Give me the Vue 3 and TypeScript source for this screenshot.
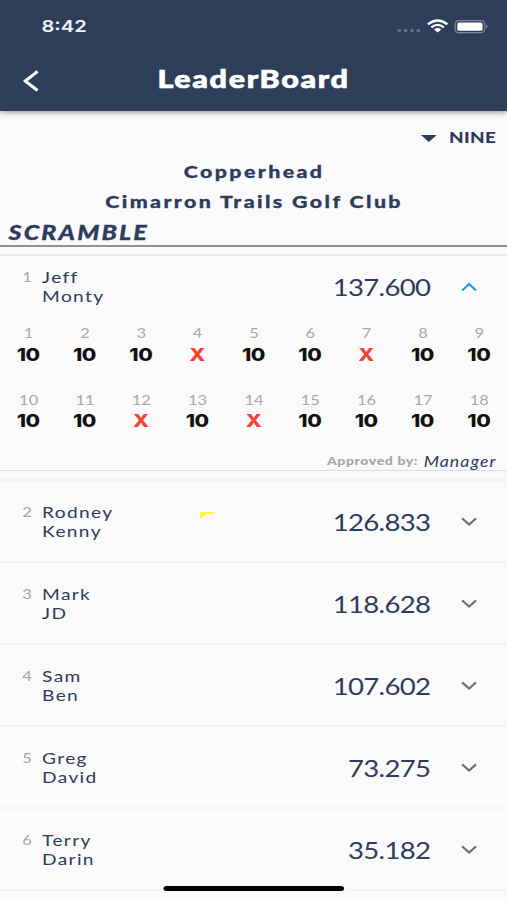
<script setup lang="ts">
import { ref } from 'vue'

interface Team {
  rank: number
  players: [string, string]
  score: string
  holes?: string[]
  approvedBy?: string
}

const teams: Team[] = [
  {
    rank: 1,
    players: ['Jeff', 'Monty'],
    score: '137.600',
    holes: ['10', '10', '10', 'X', '10', '10', 'X', '10', '10', '10', '10', 'X', '10', 'X', '10', '10', '10', '10'],
    approvedBy: 'Manager',
  },
  { rank: 2, players: ['Rodney', 'Kenny'], score: '126.833' },
  { rank: 3, players: ['Mark', 'JD'], score: '118.628' },
  { rank: 4, players: ['Sam', 'Ben'], score: '107.602' },
  { rank: 5, players: ['Greg', 'David'], score: '73.275' },
  { rank: 6, players: ['Terry', 'Darin'], score: '35.182' },
]

const openRank = ref<number | null>(1)

function toggle(rank: number) {
  openRank.value = openRank.value === rank ? null : rank
}
</script>

<template>
  <div class="viewport">
    <main class="screen">
      <header class="app-bar">
        <div class="status">
          <span class="clock">8:42</span>
          <svg class="status-icons" viewBox="0 0 90 16" preserveAspectRatio="none">
            <g fill="#626e87">
              <circle cx="2.8" cy="12.6" r="1.9" /><circle cx="9.1" cy="12.6" r="1.9" />
              <circle cx="15.4" cy="12.6" r="1.9" /><circle cx="21.8" cy="12.6" r="1.9" />
            </g>
            <g fill="none" stroke="#fff" stroke-width="2.3">
              <path d="M31.3 6.3 Q41 -1.3 50.7 6.3" />
              <path d="M34.7 9.3 Q41 4.4 47.3 9.3" />
            </g>
            <path d="M37.4 11.4 Q41 8.6 44.6 11.4 L41 14.6 Z" fill="#fff" />
            <rect x="58.4" y="2.6" width="29.6" height="12" rx="3.6" fill="none" stroke="#7d879c" stroke-width="1.2" />
            <rect x="60.6" y="4.4" width="25.2" height="8.4" rx="1.6" fill="#fff" />
            <path d="M89.4 6.4 Q92.4 8.6 89.4 10.8Z" fill="#7d879c" />
          </svg>
        </div>
        <div class="title-row">
          <svg class="back" viewBox="0 0 16 22" preserveAspectRatio="none">
            <path d="M14.5 1.5 L2 11 L14.5 20.5" fill="none" stroke="#fff" stroke-width="3.1" />
          </svg>
          <h1>LeaderBoard</h1>
        </div>
      </header>

      <section class="intro">
        <div class="filter">
          <svg class="caret" viewBox="0 0 16 7" preserveAspectRatio="none"><path d="M0 0H16L8 7Z" fill="#2d3c58" /></svg>
          <span>NINE</span>
        </div>
        <p class="course">Copperhead</p>
        <p class="course club">Cimarron Trails Golf Club</p>
        <h2>SCRAMBLE</h2>
      </section>

      <section class="list">
        <article v-for="team in teams" :key="team.rank" class="team" :class="{ open: openRank === team.rank }">
          <div class="summary" @click="toggle(team.rank)">
            <span class="rank">{{ team.rank }}</span>
            <div class="players">
              <span v-for="player in team.players" :key="player">{{ player }}</span>
            </div>
            <span class="score">{{ team.score }}</span>
            <svg class="chevron" viewBox="0 0 16 10" preserveAspectRatio="none">
              <path
                :d="openRank === team.rank ? 'M1 8.6 L8 2 L15 8.6' : 'M1 1.4 L8 7.6 L15 1.4'"
                fill="none"
                stroke="currentColor"
                stroke-width="2.1"
              />
            </svg>
            <svg v-if="team.rank === 2" class="marker" viewBox="0 0 15 36" preserveAspectRatio="none">
              <path d="M0 0H15L14 1.6L6 2.6L0 7Z" fill="#fbf73c" />
              <circle cx="13.6" cy="34" r="0.8" fill="#fdfc9e" />
            </svg>
          </div>
          <template v-if="openRank === team.rank && team.holes">
            <div class="holes">
              <div v-for="(value, i) in team.holes" :key="i" class="hole">
                <span class="number">{{ i + 1 }}</span>
                <span class="value" :class="{ miss: value === 'X' }">{{ value }}</span>
              </div>
            </div>
            <p class="approval"><span>Approved by:</span> <em>{{ team.approvedBy }}</em></p>
          </template>
        </article>
      </section>
      <div class="home-indicator"></div>
    </main>
  </div>
</template>

<style>
body {
  margin: 0;
  background: #fafafa;
}
</style>

<style scoped>
.viewport {
  width: 507px;
  height: 900px;
  overflow: hidden;
}
/* The phone layout is widened horizontally to fill the frame. */
.screen {
  position: relative;
  width: 415.574px;
  height: 900px;
  overflow: hidden;
  transform: scaleX(1.22);
  transform-origin: 0 0;
  background: #fafafb;
  color: #2d3c5c;
  font-family: Lato, 'Open Sans', sans-serif;
}
h1,
h2,
p {
  margin: 0;
}
.app-bar {
  position: relative;
  height: 111px;
  background: #2e3d58;
  box-shadow: 0 1px 5px rgba(0, 0, 0, 0.45);
  color: #fff;
}
.status {
  display: flex;
  justify-content: space-between;
  align-items: center;
  height: 52px;
  padding: 0 16.5px 0 34px;
}
.clock {
  font: 600 16.5px/20px Inter, sans-serif;
  letter-spacing: 0;
  color: #eef3fb;
}
.status-icons {
  width: 74px;
  height: 16px;
  margin-top: -1px;
  overflow: visible;
}
.title-row {
  display: grid;
  grid-template-columns: 60px 1fr 60px;
  align-items: center;
  height: 52px;
}
.back {
  width: 13px;
  height: 22px;
  margin: 5px 0 0 18.6px;
}
h1 {
  text-align: center;
  font-size: 25px;
  line-height: 30px;
  font-weight: 900;
  letter-spacing: 1.35px;
  -webkit-text-stroke: 0.7px #fff;
}
.intro {
  height: 136px;
  box-sizing: border-box;
  padding-top: 16px;
  border-bottom: 2px solid #929296;
}
.filter {
  display: flex;
  justify-content: flex-end;
  align-items: center;
  height: 20px;
  padding-right: 8.8px;
  font-size: 15.5px;
  font-weight: 900;
  letter-spacing: 0.3px;
}
.caret {
  width: 13px;
  height: 7px;
  margin: 3px 9.8px 0 0;
}
.course {
  margin-top: 10px;
  text-align: center;
  font-size: 17.5px;
  line-height: 30px;
  font-weight: 900;
  letter-spacing: 1.97px;
  text-indent: 1px;
  -webkit-text-stroke: 0.3px #2d3c5c;
}
.club {
  margin-top: 0;
}
h2 {
  padding-left: 7px;
  font-size: 20.5px;
  line-height: 31px;
  font-style: italic;
  font-weight: 900;
  letter-spacing: 1.75px;
  -webkit-text-stroke: 0.3px #2d3c5c;
}
.list {
  padding-top: 7px;
}
.team {
  box-sizing: border-box;
  height: 82px;
  border-bottom: 2px solid #f3f4f4;
}
.team.open {
  height: 217px;
  margin-bottom: 8px;
  border-top: 2px solid #e6e6e6;
  border-bottom: 1px solid #dcdcdc;
}
.team.open + .team {
  height: 84px;
  border-top: 2px solid #f3f3f3;
}
.summary {
  position: relative;
  display: grid;
  grid-template-columns: 26px 1fr auto 13px;
  height: 80px;
  padding: 0 24.5px 0 0;
  align-items: center;
}
.open .summary {
  height: 63px;
}
.rank {
  align-self: start;
  margin-top: 22px;
  text-align: right;
  font-size: 13.5px;
  line-height: 18px;
  color: #a5a5a5;
}
.open .rank {
  margin-top: 12px;
}
.players {
  display: flex;
  flex-direction: column;
  margin-top: 2px;
  padding-left: 8.5px;
  font-size: 15.7px;
  line-height: 19px;
  letter-spacing: 1.1px;
}
.open .players {
  margin-top: -1px;
}
.score {
  margin: 4px 25.3px 0 0;
  font-size: 22.6px;
  line-height: 30px;
  letter-spacing: -0.55px;
}
.open .score {
  margin-top: 0;
}
.chevron {
  width: 13px;
  height: 10px;
  margin-top: 1px;
  color: #707070;
}
.open .chevron {
  margin-top: -1px;
  color: #2094ee;
}
.marker {
  position: absolute;
  left: 164px;
  top: 31px;
  width: 12.3px;
  height: 36px;
}
.holes {
  display: grid;
  grid-template-columns: repeat(9, 1fr);
  grid-auto-rows: 66.5px;
  height: 131px;
  margin-top: 4px;
}
.hole {
  display: flex;
  flex-direction: column;
  align-items: center;
}
.number {
  padding-left: 0.8px;
  font-size: 13.5px;
  line-height: 20px;
  color: #a8a8a8;
}
.value {
  padding-top: 0.5px;
  font: 800 17.3px/22px Inter, sans-serif;
  letter-spacing: -0.4px;
  color: #111;
}
.miss {
  color: #f44336;
}
.approval {
  display: flex;
  justify-content: flex-end;
  align-items: flex-start;
  gap: 4.5px;
  margin-top: -2px;
  padding-right: 8.5px;
  font-size: 11.5px;
  line-height: 18px;
  font-weight: 900;
  letter-spacing: 0.5px;
  color: #a5a5a5;
}
.approval em {
  margin-top: 1px;
  font-size: 14.5px;
  font-weight: 400;
  letter-spacing: 0.9px;
  color: #2d3c5c;
}
.home-indicator {
  position: absolute;
  left: 134px;
  bottom: 9px;
  width: 148px;
  height: 5px;
  border-radius: 3px;
  background: #000;
}
</style>
